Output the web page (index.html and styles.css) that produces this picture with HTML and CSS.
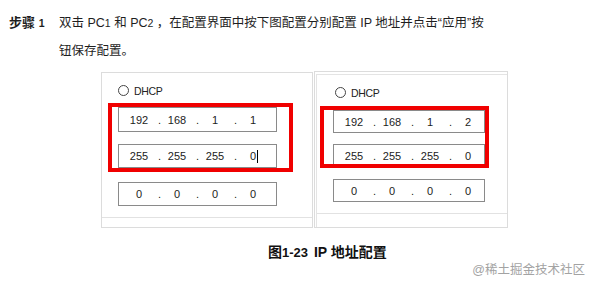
FILE: index.html
```html
<!DOCTYPE html>
<html lang="zh">
<head>
  <meta charset="UTF-8" />
  <title>IP 地址配置</title>
  <link rel="stylesheet" href="styles.css">
</head>
<body>
  <div class="step">
    <div class="step-label">步骤 <span class="num">1</span></div>
    <p class="step-text">双击 PC<span class="num">1</span> 和 PC<span class="num">2</span> ，在配置界面中按下图配置分别配置 IP 地址并点击<span class="quote">“</span>应用<span class="quote">”</span>按钮保存配置。</p>
  </div>

  <div class="figure">
    <div class="panel panel-left">
      <div class="radio"><span class="circle"></span>DHCP</div>
      <div class="mark">
        <div class="ip ip-first"><span>192</span><i>.</i><span>168</span><i>.</i><span>1</span><i>.</i><span>1</span></div>
        <div class="ip ip-second"><span>255</span><i>.</i><span>255</span><i>.</i><span>255</span><i>.</i><span class="caret">0</span></div>
      </div>
      <div class="ip ip-alone"><span>0</span><i>.</i><span>0</span><i>.</i><span>0</span><i>.</i><span>0</span></div>
      <div class="panel-foot"></div>
    </div>

    <div class="panel panel-right">
      <div class="panel-inner">
        <div class="radio"><span class="circle"></span>DHCP</div>
        <div class="mark">
          <div class="ip ip-first"><span>192</span><i>.</i><span>168</span><i>.</i><span>1</span><i>.</i><span>2</span></div>
          <div class="ip ip-second"><span>255</span><i>.</i><span>255</span><i>.</i><span>255</span><i>.</i><span>0</span></div>
        </div>
        <div class="ip ip-alone"><span>0</span><i>.</i><span>0</span><i>.</i><span>0</span><i>.</i><span>0</span></div>
        <div class="panel-foot"></div>
      </div>
    </div>
  </div>

  <div class="caption">图<span class="num">1-23</span> IP 地址配置</div>
  <div class="watermark">@稀土掘金技术社区</div>
</body>
</html>
```

FILE: styles.css
```css
body {
  margin: 0;
  font-family: "Liberation Sans", "Noto Sans CJK SC", sans-serif;
  color: #1e1e1e;
  background: #fff;
}
.num {
  font-size: 10.5px;
  line-height: 1;
}
.quote {
  font-family: "Liberation Sans", sans-serif;
}
.step {
  display: flex;
  padding: 9px 0 0 9px;
  font-size: 12.5px;
  line-height: 28px;
}
.step-label {
  width: 50px;
  flex-shrink: 0;
  font-size: 13px;
  font-weight: bold;
}
.step-text {
  margin: 0;
  width: 432px;
}

/* figure */
.figure {
  display: flex;
  align-items: flex-start;
  gap: 1px;
  padding-left: 101px;
  margin-top: 6px;
}
.panel {
  border: 1px solid #dcdcdc;
  box-sizing: border-box;
}
.panel-left {
  width: 212px;
  height: 156px;
  margin-top: 1px;
}
.panel-right {
  width: 194px;
  height: 157px;
  padding: 2px 0 0 1px;
}
.panel-inner {
  border-top: 1px solid #e4e4e4;
  border-left: 1px solid #e4e4e4;
  height: 100%;
  box-sizing: border-box;
}
.radio {
  display: flex;
  align-items: center;
  height: 11px;
  margin: 12px 0 0 16px;
  font-size: 10.5px;
  letter-spacing: -0.3px;
  color: #222;
}
.circle {
  width: 9px;
  height: 9px;
  border: 1px solid #444;
  border-radius: 50%;
  margin-right: 5px;
}
.mark {
  border: 4px solid #f00000;
  margin: 7px 0 0 6px;
  padding: 0 12px 0 6px;
  width: 159px;
}
.ip {
  display: flex;
  width: 159px;
  box-sizing: border-box;
  border: 1px solid #8a8a8a;
  background: #fff;
  padding-left: 7px;
  align-items: center;
  font-size: 11px;
  color: #1c1c1c;
}
.ip span {
  width: 26px;
  text-align: center;
}
.ip i {
  font-style: normal;
  width: 12px;
  text-align: center;
  padding-left: 3px;
  box-sizing: border-box;
}
.ip-first {
  height: 25px;
}
.ip-second {
  height: 24px;
  margin-top: 12px;
}
.ip-alone {
  height: 24px;
  margin: 10px 0 0 16px;
}
.caret {
  position: relative;
}
.caret::after {
  content: "";
  position: absolute;
  left: 17px;
  top: 0;
  width: 1px;
  height: 13px;
  background: #000;
}
.panel-foot {
  border-top: 1px solid #e2e2e2;
  margin-top: 11px;
}

.panel-right .radio {
  margin: 12px 0 0 18px;
}
.panel-right .mark {
  margin: 8px 0 0 3px;
  padding: 0 0 0 9px;
  width: 152px;
  height: 54px;
  overflow: hidden;
}
.panel-right .ip {
  width: 152px;
}
.panel-right .ip-first {
  height: 23px;
}
.panel-right .ip-second {
  margin-top: 11px;
}
.panel-right .ip-alone {
  width: 152px;
  height: 23px;
  margin: 11px 0 0 16px;
}

.caption {
  margin-top: 14px;
  padding-left: 268px;
  font-size: 14px;
  line-height: 20px;
  font-weight: bold;
  color: #111;
}
.caption .num {
  font-size: 13px;
  padding-right: 2px;
}
.watermark {
  text-align: right;
  padding-right: 11px;
  font-size: 12.5px;
  line-height: 16px;
  color: #a3a3a3;
}
```
